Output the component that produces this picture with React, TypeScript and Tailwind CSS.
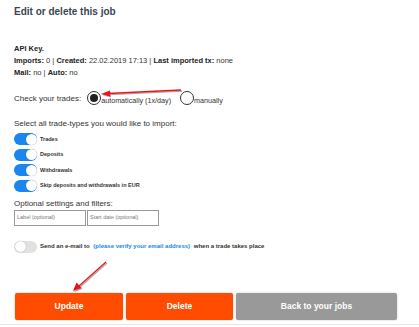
import React from 'react';

function Toggle({ on }: { on: boolean }) {
  return (
    <div className={`w-[23px] h-[12px] rounded-full flex items-center shrink-0 ${on ? 'bg-[#1a86f0] justify-end' : 'bg-[#e2e2e2] justify-start'}`}>
      <div className="w-[11px] h-[11px] rounded-full bg-white shadow-[0_0_1px_rgba(0,0,0,0.4)] mx-[0.5px]" />
    </div>
  );
}

function Radio({ checked }: { checked: boolean }) {
  return (
    <div className="w-[14px] h-[14px] rounded-full border border-[#333] bg-white flex items-center justify-center shrink-0">
      {checked && <div className="w-[8px] h-[8px] rounded-full bg-[#222]" />}
    </div>
  );
}

export default function App() {
  const types = ['Trades', 'Deposits', 'Withdrawals', 'Skip deposits and withdrawals in EUR'];
  return (
    <div className="relative w-[419px] h-[327px] bg-white overflow-hidden text-[#333]" style={{ fontFamily: '"Liberation Sans", Arial, sans-serif' }}>
      <div className="pl-[14px] pt-[6px]">
        <h1 className="text-[10px] leading-[12px] font-bold text-[#3b4654]">Edit or delete this job</h1>

        <div className="mt-[25px] text-[7.5px] leading-[12px]">
          <div className="font-bold text-[#222]">API Key.</div>
          <div><b className="text-[#222]">Imports:</b> 0 | <b className="text-[#222]">Created:</b> 22.02.2019 17:13 | <b className="text-[#222]">Last imported tx:</b> none</div>
          <div><b className="text-[#222]">Mail:</b> no | <b className="text-[#222]">Auto:</b> no</div>
        </div>

        <div className="mt-[12px] flex items-end text-[8px] leading-[10px] h-[14px]">
          <span className="mr-[6px] mb-[1px]">Check your trades:</span>
          <Radio checked />
          <span className="mb-[-1px] text-[7.2px]">automatically (1x/day)</span>
          <span className="ml-[9px]"><Radio checked={false} /></span>
          <span className="mb-[-1px] text-[7.2px]">manually</span>
        </div>

        <div className="mt-[14px] text-[8px] leading-[10px]">Select all trade-types you would like to import:</div>

        <div className="mt-[4px] flex flex-col gap-[3.5px]">
          {types.map(t => (
            <div key={t} className="flex items-center gap-[3px] h-[12px]">
              <Toggle on />
              <span className="text-[5.5px] font-bold text-[#333]">{t}</span>
            </div>
          ))}
        </div>

        <div className="mt-[7px] text-[8px] leading-[10px]">Optional settings and filters:</div>

        <div className="mt-[1px] flex gap-[1px]">
          <div className="w-[72px] h-[16px] border border-[#999] flex items-center px-[2px] text-[5.5px] text-[#777]">Label (optional)</div>
          <div className="w-[72px] h-[16px] border border-[#999] flex items-center px-[2px] text-[5.5px] text-[#777]">Start date (optional)</div>
        </div>

        <div className="mt-[15px] flex items-center gap-[3px]">
          <Toggle on={false} />
          <span className="text-[6px] font-bold text-[#333]">
            Send an e-mail to <span className="text-[#1a86f0] ml-[2px] mr-[2px]">(please verify your email address)</span> when a trade takes place
          </span>
        </div>

        <div className="mt-[40px] flex gap-[3px] pl-[1px]">
          <button className="w-[108px] h-[27px] rounded-[2px] bg-[#ff4c00] text-white text-[8.5px] font-bold shadow-[0_0_2px_rgba(0,0,0,0.25)]">Update</button>
          <button className="w-[107px] h-[27px] rounded-[2px] bg-[#ff4c00] text-white text-[8.5px] font-bold shadow-[0_0_2px_rgba(0,0,0,0.25)]">Delete</button>
          <button className="w-[161px] h-[27px] rounded-[2px] bg-[#999999] text-white text-[8.5px] font-bold shadow-[0_0_2px_rgba(0,0,0,0.25)]">Back to your jobs</button>
        </div>
      </div>

      <div className="absolute left-0 right-0 top-[324px] h-[1px] bg-[#e6e6e6]" />

      <svg className="absolute left-0 top-0 pointer-events-none" width="419" height="327">
        <defs>
          <filter id="sh" x="-20%" y="-20%" width="140%" height="140%">
            <feDropShadow dx="1" dy="1" stdDeviation="0.6" floodColor="#000" floodOpacity="0.35" />
          </filter>
        </defs>
        <g filter="url(#sh)" stroke="#e8191b" fill="#e8191b">
          <line x1="181" y1="90" x2="108" y2="93.5" strokeWidth="1.3" />
          <polygon points="101,94 110,90.5 110,96.5" stroke="none" />
          <line x1="106" y1="262" x2="79" y2="286" strokeWidth="1.3" />
          <polygon points="73,291 76.5,282.5 81.5,288" stroke="none" />
        </g>
      </svg>
    </div>
  );
}
